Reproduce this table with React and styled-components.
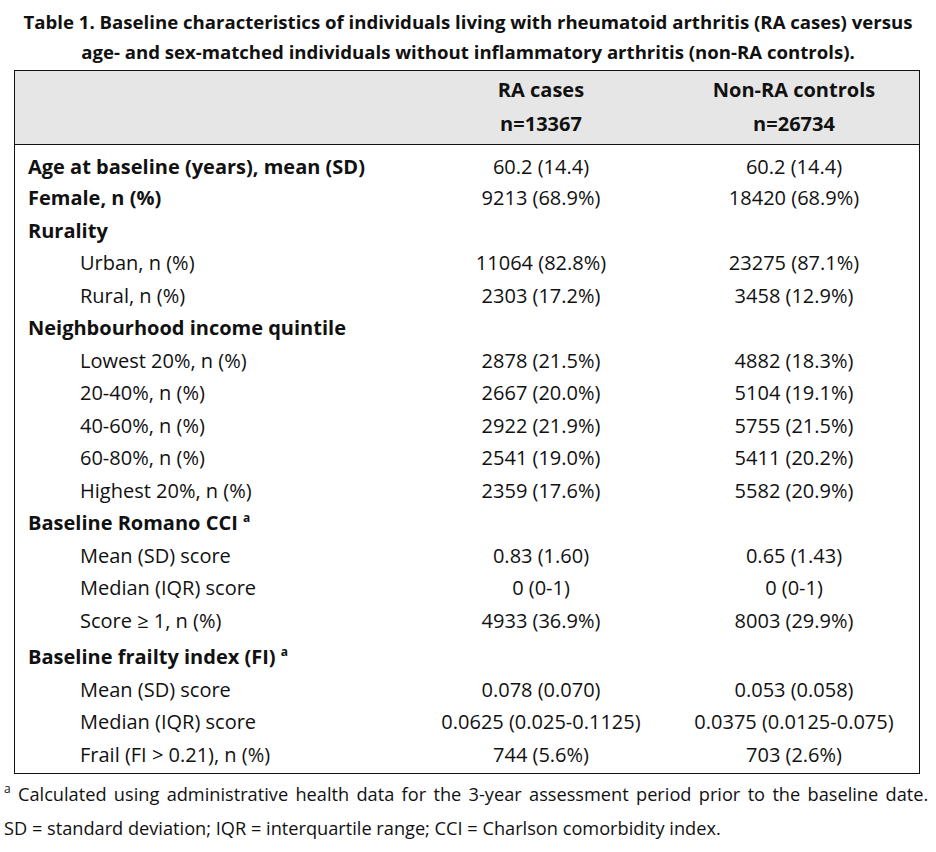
import React from "react";
import styled, { createGlobalStyle } from "styled-components";

const GlobalStyle = createGlobalStyle`
  body {
    margin: 0;
    background: #ffffff;
    font-family: "Open Sans", "Liberation Sans", sans-serif;
    color: #111111;
  }
`;

const Page = styled.div`
  width: 936px;
  padding-top: 7px;
`;

const Title = styled.div`
  font-size: 18.6px;
  font-weight: 700;
  line-height: 30px;
  text-align: center;
  white-space: nowrap;
`;

const Table = styled.div`
  margin: 3px 0 0 14px;
  width: 906px;
  border: 1.5px solid #111;
  box-sizing: border-box;
`;

const Head = styled.div`
  background: #e7e6e6;
  border-bottom: 1.5px solid #111;
  padding: 2px 0 3px;
`;

const Body = styled.div`
  padding: 6px 0 2px;
`;

const Row = styled.div`
  display: grid;
  grid-template-columns: 398px 256px 1fr;
  align-items: center;
  height: ${({ $h }) => $h || 32.5}px;
  margin-top: ${({ $gap }) => $gap || 0}px;
  font-size: 20px;
  line-height: 1;
`;

const Label = styled.div`
  padding-left: ${({ $indent }) => ($indent ? 65 : 13)}px;
  font-weight: ${({ $bold }) => ($bold ? 700 : 400)};
  white-space: nowrap;
`;

const Cell = styled.div`
  text-align: center;
  white-space: nowrap;
  font-weight: ${({ $bold }) => ($bold ? 700 : 400)};
`;

const Sup = styled.sup`
  font-size: 12px;
  vertical-align: 8px;
  line-height: 0;
`;

const Notes = styled.div`
  padding: 3px 0 0 4px;
  font-size: 18.2px;
  line-height: 34px;
`;

const NoteLine = styled.div`
  white-space: nowrap;
  word-spacing: ${({ $spread }) => ($spread ? 2.6 : 0)}px;
`;

const rows = [
  { label: "Age at baseline (years), mean (SD)", bold: true, a: "60.2 (14.4)", b: "60.2 (14.4)", h: 31 },
  { label: "Female, n (%)", bold: true, a: "9213 (68.9%)", b: "18420 (68.9%)" },
  { label: "Rurality", bold: true },
  { label: "Urban, n (%)", indent: true, a: "11064 (82.8%)", b: "23275 (87.1%)" },
  { label: "Rural, n (%)", indent: true, a: "2303 (17.2%)", b: "3458 (12.9%)" },
  { label: "Neighbourhood income quintile", bold: true },
  { label: "Lowest 20%, n (%)", indent: true, a: "2878 (21.5%)", b: "4882 (18.3%)" },
  { label: "20-40%, n (%)", indent: true, a: "2667 (20.0%)", b: "5104 (19.1%)" },
  { label: "40-60%, n (%)", indent: true, a: "2922 (21.9%)", b: "5755 (21.5%)" },
  { label: "60-80%, n (%)", indent: true, a: "2541 (19.0%)", b: "5411 (20.2%)" },
  { label: "Highest 20%, n (%)", indent: true, a: "2359 (17.6%)", b: "5582 (20.9%)" },
  { label: "Baseline Romano CCI", bold: true, note: true },
  { label: "Mean (SD) score", indent: true, a: "0.83 (1.60)", b: "0.65 (1.43)" },
  { label: "Median (IQR) score", indent: true, a: "0 (0-1)", b: "0 (0-1)" },
  { label: "Score ≥ 1, n (%)", indent: true, a: "4933 (36.9%)", b: "8003 (29.9%)" },
  { label: "Baseline frailty index (FI)", bold: true, note: true, gap: 4 },
  { label: "Mean (SD) score", indent: true, a: "0.078 (0.070)", b: "0.053 (0.058)" },
  { label: "Median (IQR) score", indent: true, a: "0.0625 (0.025-0.1125)", b: "0.0375 (0.0125-0.075)" },
  { label: "Frail (FI > 0.21), n (%)", indent: true, a: "744 (5.6%)", b: "703 (2.6%)" },
];

const App = () => {
  return (
    <Page>
      <GlobalStyle />
      <Title>
        Table 1. Baseline characteristics of individuals living with rheumatoid arthritis (RA cases) versus
        <br />
        age- and sex-matched individuals without inflammatory arthritis (non-RA controls).
      </Title>
      <Table>
        <Head>
          <Row $h={34}>
            <Label />
            <Cell $bold>RA cases</Cell>
            <Cell $bold>Non-RA controls</Cell>
          </Row>
          <Row $h={34}>
            <Label />
            <Cell $bold>n=13367</Cell>
            <Cell $bold>n=26734</Cell>
          </Row>
        </Head>
        <Body>
          {rows.map((r, i) => (
            <Row key={i} $h={r.h} $gap={r.gap}>
              <Label $bold={r.bold} $indent={r.indent}>
                {r.label}
                {r.note && (
                  <>
                    {" "}
                    <Sup>a</Sup>
                  </>
                )}
              </Label>
              <Cell>{r.a}</Cell>
              <Cell>{r.b}</Cell>
            </Row>
          ))}
        </Body>
      </Table>
      <Notes>
        <NoteLine $spread>
          <Sup>a</Sup> Calculated using administrative health data for the 3-year assessment period prior to the baseline date.
        </NoteLine>
        <NoteLine>SD = standard deviation; IQR = interquartile range; CCI = Charlson comorbidity index.</NoteLine>
      </Notes>
    </Page>
  );
};

export default App;
